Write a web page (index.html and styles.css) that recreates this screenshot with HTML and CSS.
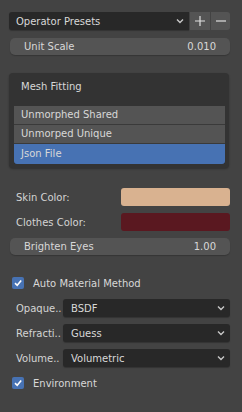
FILE: index.html
```html
<!DOCTYPE html>
<html lang="en">
<head>
  <meta charset="UTF-8">
  <title>Import Settings</title>
  <link rel="stylesheet" href="styles.css">
</head>
<body>

  <div class="panel">

    <div class="preset-row">
      <div class="select preset-select">
        <span>Operator Presets</span>
        <svg class="chevron" width="8" height="6" viewBox="0 0 8 6"><path d="M1 1.5 L4 4.5 L7 1.5" fill="none" stroke="#c8c8c8" stroke-width="1.4"/></svg>
      </div>
      <button class="icon-btn">
        <svg width="10" height="10" viewBox="0 0 10 10"><path d="M5 0 V10 M0 5 H10" stroke="#e0e0e0" stroke-width="1.2"/></svg>
      </button>
      <button class="icon-btn last">
        <svg width="10" height="10" viewBox="0 0 10 10"><path d="M0 5 H10" stroke="#e0e0e0" stroke-width="1.2"/></svg>
      </button>
    </div>

    <div class="number-field unit-scale">
      <span>Unit Scale</span>
      <span>0.010</span>
    </div>

    <div class="box">
      <div class="box-title">Mesh Fitting</div>
      <div class="list">
        <div class="list-item">Unmorphed Shared</div>
        <div class="list-item">Unmorped Unique</div>
        <div class="list-item active">Json File</div>
      </div>
    </div>

    <div class="color-row skin-row">
      <span class="label">Skin Color:</span>
      <div class="swatch skin"></div>
    </div>
    <div class="color-row">
      <span class="label">Clothes Color:</span>
      <div class="swatch clothes"></div>
    </div>

    <div class="number-field eyes">
      <span>Brighten Eyes</span>
      <span>1.00</span>
    </div>

    <label class="check-row auto">
      <span class="checkbox">
        <svg width="10" height="10" viewBox="0 0 10 10"><path d="M2 5.2 L4.2 7.3 L8.2 2.6" fill="none" stroke="#fff" stroke-width="1.6"/></svg>
      </span>
      Auto Material Method
    </label>

    <div class="select-row">
      <span class="label">Opaque..</span>
      <div class="select">
        <span>BSDF</span>
        <svg class="chevron" width="8" height="6" viewBox="0 0 8 6"><path d="M1 1.5 L4 4.5 L7 1.5" fill="none" stroke="#c8c8c8" stroke-width="1.4"/></svg>
      </div>
    </div>
    <div class="select-row">
      <span class="label">Refracti..</span>
      <div class="select">
        <span>Guess</span>
        <svg class="chevron" width="8" height="6" viewBox="0 0 8 6"><path d="M1 1.5 L4 4.5 L7 1.5" fill="none" stroke="#c8c8c8" stroke-width="1.4"/></svg>
      </div>
    </div>
    <div class="select-row">
      <span class="label">Volume..</span>
      <div class="select">
        <span>Volumetric</span>
        <svg class="chevron" width="8" height="6" viewBox="0 0 8 6"><path d="M1 1.5 L4 4.5 L7 1.5" fill="none" stroke="#c8c8c8" stroke-width="1.4"/></svg>
      </div>
    </div>

    <label class="check-row env">
      <span class="checkbox">
        <svg width="10" height="10" viewBox="0 0 10 10"><path d="M2 5.2 L4.2 7.3 L8.2 2.6" fill="none" stroke="#fff" stroke-width="1.6"/></svg>
      </span>
      Environment
    </label>

  </div>

</body>
</html>
```

FILE: styles.css
```css
body {
  margin: 0;
  background: #434343;
  font-family: "DejaVu Sans", sans-serif;
  font-size: 10px;
  color: #d8d8d8;
  width: 242px;
  height: 412px;
  overflow: hidden;
}

.panel {
  padding: 12px 0 0 9px;
  width: 221px;
}

.preset-row {
  display: flex;
  height: 18px;
}

.select {
  flex: 1;
  display: flex;
  align-items: center;
  justify-content: space-between;
  background: #282828;
  border-radius: 3px;
  padding: 0 5px 0 9px;
  height: 18px;
  box-shadow: 0 1px 1px rgba(0,0,0,0.25);
}

.preset-select {
  border-radius: 3px 0 0 3px;
  padding-left: 7px;
}

.chevron {
  flex: none;
}

.icon-btn {
  width: 20px;
  height: 18px;
  margin-left: 1px;
  border: none;
  padding: 0;
  background: #545454;
  display: flex;
  align-items: center;
  justify-content: center;
}

.icon-btn.last {
  width: 19px;
  border-radius: 0 3px 3px 0;
}

.number-field {
  display: flex;
  justify-content: space-between;
  align-items: center;
  height: 17px;
  margin-left: 1px;
  padding: 0 14px 0 14px;
  background: #545454;
  border-radius: 5px;
  box-shadow: 0 1px 1px rgba(0,0,0,0.2);
}

.unit-scale {
  margin-top: 8px;
}

.box {
  margin-top: 18px;
  width: 220px;
  background: #333333;
  border-radius: 4px;
  padding: 6px 4px 4px 5px;
  box-sizing: border-box;
  box-shadow: 0 1px 2px rgba(0,0,0,0.3);
}

.box-title {
  height: 16px;
  line-height: 16px;
  padding-left: 7px;
  margin-bottom: 11px;
}

.list {
  background: #2b2b2b;
}

.list-item {
  height: 18px;
  line-height: 18px;
  padding-left: 7px;
  background: #545454;
  border-bottom: 1px solid #3a3a3a;
}

.list-item.active {
  height: 20px;
  line-height: 20px;
  background: #4772b3;
  border-radius: 0 0 3px 3px;
  border-bottom: none;
}

.color-row {
  display: flex;
  align-items: center;
  justify-content: space-between;
  height: 18px;
  margin-top: 7px;
}

.skin-row {
  margin-top: 20px;
}

.label {
  padding-left: 7px;
  color: #d4d4d4;
}

.swatch {
  width: 109px;
  height: 18px;
  border-radius: 3px;
}

.swatch.skin {
  background: #d9b290;
}

.swatch.clothes {
  background: #5a1820;
}

.eyes {
  margin-top: 7px;
}

.check-row {
  display: flex;
  align-items: center;
  height: 12px;
  padding-left: 3px;
}

.checkbox {
  width: 12px;
  height: 12px;
  border-radius: 2px;
  background: #4772b3;
  margin-right: 9px;
  display: flex;
  align-items: center;
  justify-content: center;
}

.auto {
  margin-top: 22px;
}

.select-row {
  display: flex;
  align-items: center;
  height: 18px;
  margin-top: 7px;
}

.select-row .label {
  width: 47px;
  flex: none;
}

.select-row .select {
  padding-left: 8px;
}

.auto + .select-row {
  margin-top: 10px;
}

.env {
  margin-top: 10px;
}
```
